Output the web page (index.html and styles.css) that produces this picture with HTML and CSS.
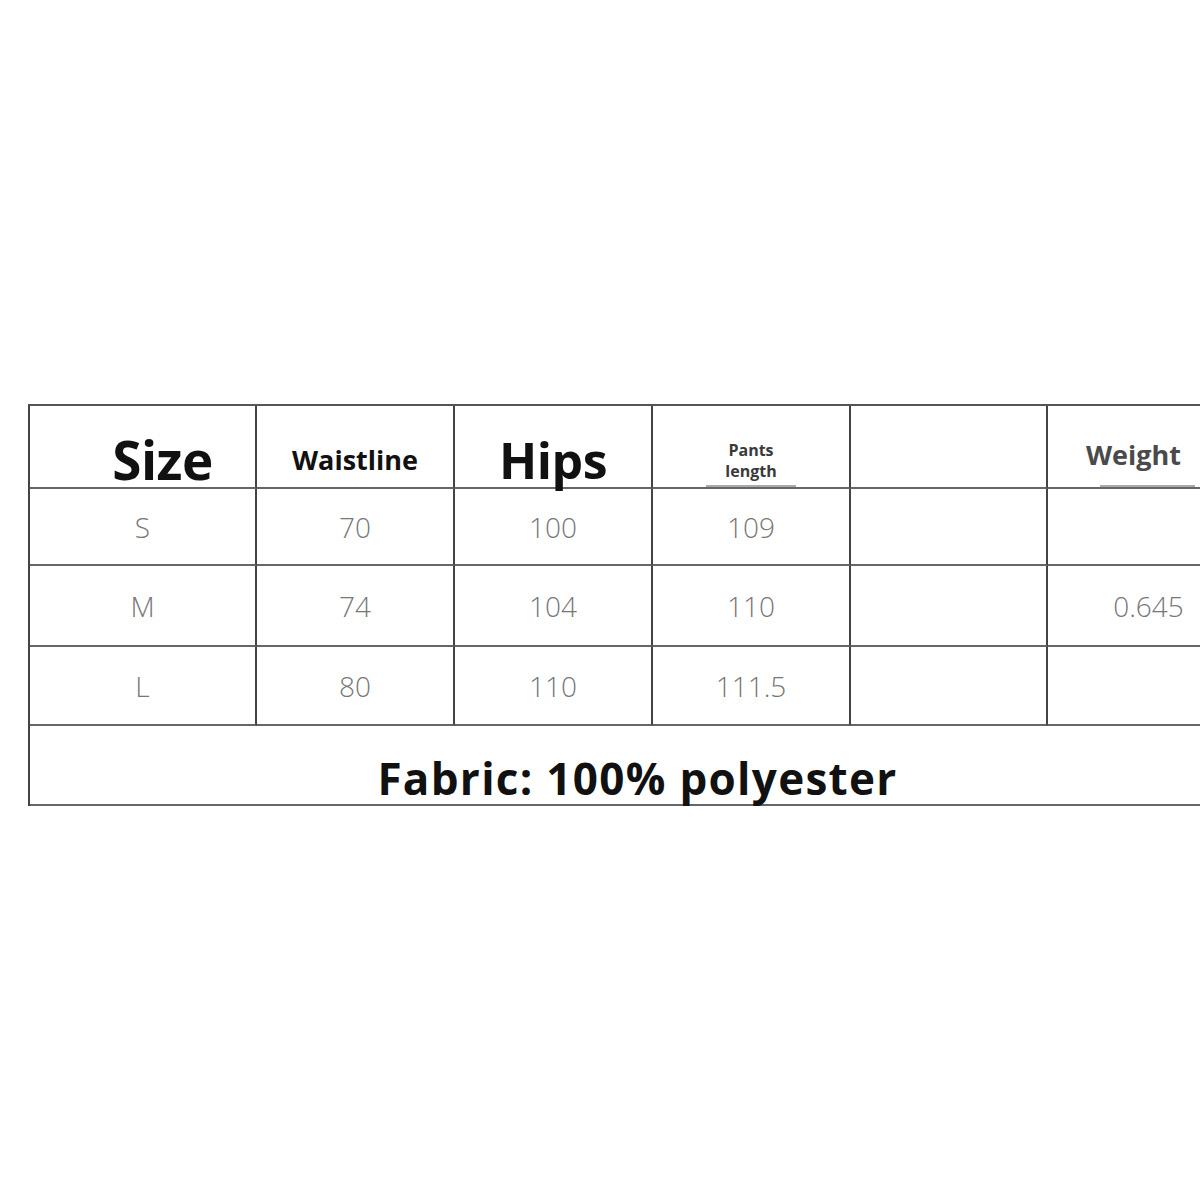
FILE: index.html
```html
<!DOCTYPE html>
<html lang="en">
<head>
<meta charset="utf-8">
<title>Size chart</title>
<link rel="stylesheet" href="styles.css">
</head>
<body>
<div class="page">
  <div class="chart">
    <div class="cell head head-size">Size</div>
    <div class="cell head head-mid">Waistline</div>
    <div class="cell head head-big">Hips</div>
    <div class="cell head head-small"><span class="ul">Pants<br>length</span></div>
    <div class="cell head"></div>
    <div class="cell head head-weight"><span class="ul">Weight</span></div>

    <div class="cell val">S</div>
    <div class="cell val">70</div>
    <div class="cell val">100</div>
    <div class="cell val">109</div>
    <div class="cell val"></div>
    <div class="cell val"></div>

    <div class="cell val">M</div>
    <div class="cell val">74</div>
    <div class="cell val">104</div>
    <div class="cell val">110</div>
    <div class="cell val"></div>
    <div class="cell val">0.645</div>

    <div class="cell val">L</div>
    <div class="cell val">80</div>
    <div class="cell val">110</div>
    <div class="cell val">111.5</div>
    <div class="cell val"></div>
    <div class="cell val"></div>

    <div class="cell fabric">Fabric: 100% polyester</div>
  </div>
</div>
</body>
</html>
```

FILE: styles.css
```css
html, body {
  margin: 0;
  padding: 0;
  background: #ffffff;
  overflow: hidden;
}
body {
  font-family: "Open Sans", "Noto Sans", sans-serif;
  color: #111;
}
.page {
  padding: 404px 0 0 28px;
  width: 1300px;
}
.chart {
  position: relative;
  display: grid;
  grid-template-columns: 227px 198px 198px 198px 197px 199px;
  grid-template-rows: 83px 77px 81px 79px 80px;
  width: 1217px;
  border-top: 2px solid #555;
  border-left: 2px solid #444;
  box-sizing: border-box;
}
.chart::after {
  content: "";
  position: absolute;
  left: -2px;
  bottom: -7px;
  width: 2px;
  height: 7px;
  background: #444;
}
.cell {
  box-sizing: border-box;
  border-right: 2px solid #444;
  border-bottom: 2px solid #666;
  display: flex;
  align-items: center;
  justify-content: center;
  text-align: center;
}
.head {
  padding-top: 26px;
  font-weight: 700;
  color: #111;
}
.head-size {
  font-size: 53px;
  padding-left: 40px;
  letter-spacing: -0.5px;
}
.head-mid {
  font-size: 27px;
}
.head-big {
  font-size: 50px;
  letter-spacing: -0.5px;
}
.head-small {
  font-size: 16px;
  line-height: 21px;
  color: #3a3a3a;
  align-items: flex-end;
}
.head-weight {
  font-size: 27px;
  color: #4a4a4a;
  align-items: flex-end;
}
.ul {
  display: inline-block;
  border-bottom: 2px solid #aaa;
}
.head-small .ul {
  padding: 0 19px 3px;
}
.head-weight .ul {
  width: 95px;
  white-space: nowrap;
  text-align: left;
  text-indent: -14px;
  padding-bottom: 12px;
  margin-left: 2px;
}
.val {
  font-size: 28px;
  font-weight: 300;
  color: #777;
}
.chart .val:nth-child(6n) {
  padding-left: 4px;
}
.fabric {
  grid-column: 1 / -1;
  font-size: 44px;
  font-weight: 700;
  letter-spacing: 1.3px;
  padding-top: 26px;
  color: #111;
}
```
